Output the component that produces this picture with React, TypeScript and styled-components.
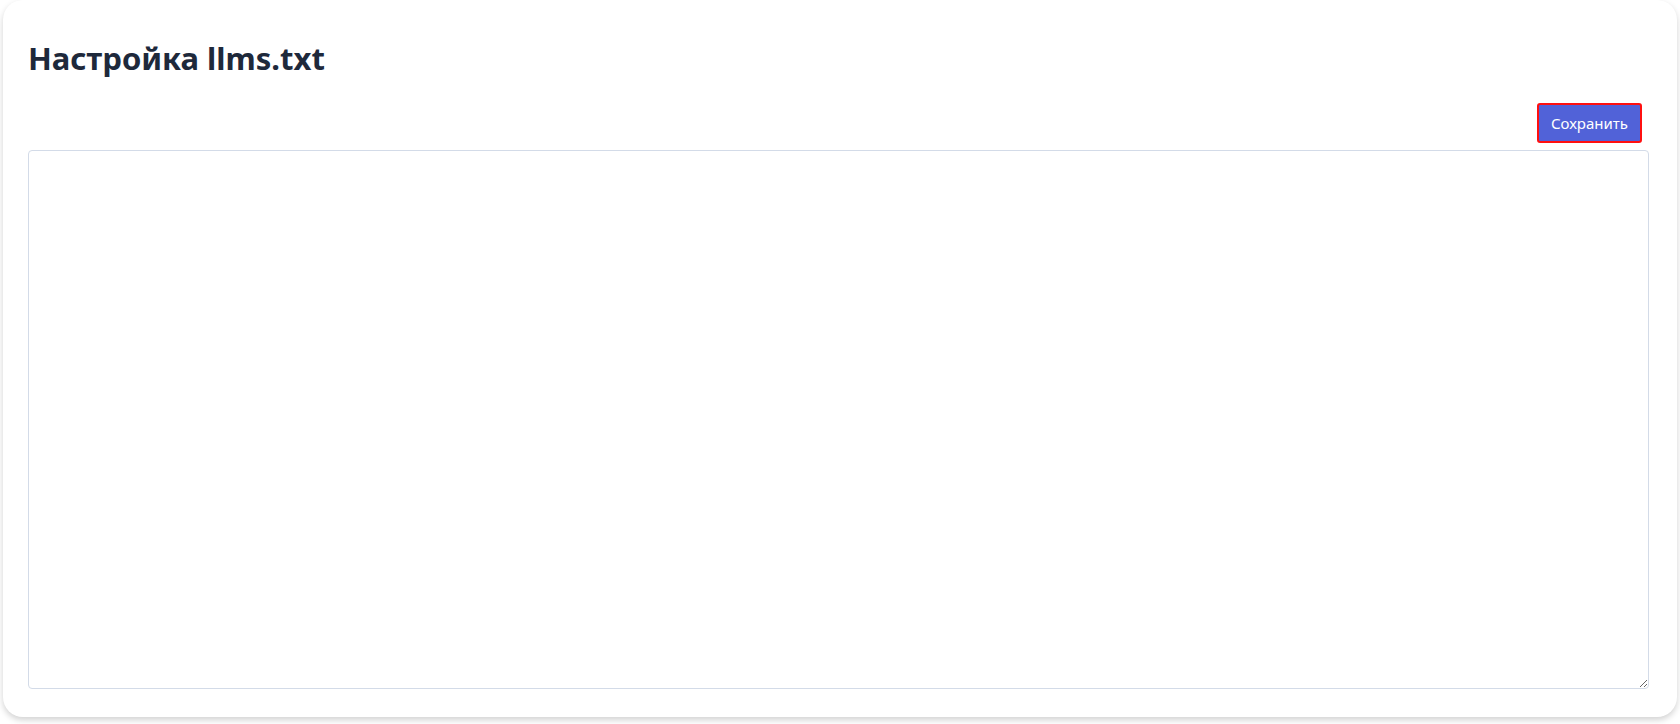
import styled, { createGlobalStyle } from "styled-components";

const GlobalStyle = createGlobalStyle`
  body {
    margin: 0;
    background: #ffffff;
    font-family: "Noto Sans", "Open Sans", sans-serif;
  }
`;

const Page = styled.div`
  padding: 0 3px 7px 3px;
  height: 724px;
  box-sizing: border-box;
`;

const Card = styled.div`
  background: #ffffff;
  border-radius: 20px;
  box-shadow: 0 3px 6px rgba(0, 0, 0, 0.18);
  padding: 34px 28px 28px 25px;
  height: 717px;
  box-sizing: border-box;
  display: flex;
  flex-direction: column;
`;

const Title = styled.h1`
  margin: 0;
  font-size: 31px;
  font-weight: 700;
  color: #1e293b;
  line-height: 48px;
`;

const Toolbar = styled.div`
  display: flex;
  justify-content: flex-end;
  margin-top: 21px;
  margin-bottom: 7px;
  padding-right: 7px;
`;

const SaveButton = styled.button`
  background: #5162d8;
  color: #ffffff;
  border: 2px solid #ff1010;
  border-radius: 3px;
  font-family: "Noto Sans", "Open Sans", sans-serif;
  font-size: 15px;
  height: 40px;
  padding: 0 12px;
  cursor: pointer;
`;

const Editor = styled.textarea`
  flex: 1;
  width: 100%;
  box-sizing: border-box;
  border: 1px solid #d3dbe8;
  border-radius: 4px;
  resize: both;
  font-family: "Liberation Mono", monospace;
  font-size: 14px;
  padding: 8px;
  outline: none;
`;

export default function App() {
  return (
    <>
      <GlobalStyle />
      <Page>
        <Card>
          <Title>Настройка llms.txt</Title>
          <Toolbar>
            <SaveButton>Сохранить</SaveButton>
          </Toolbar>
          <Editor />
        </Card>
      </Page>
    </>
  );
}
